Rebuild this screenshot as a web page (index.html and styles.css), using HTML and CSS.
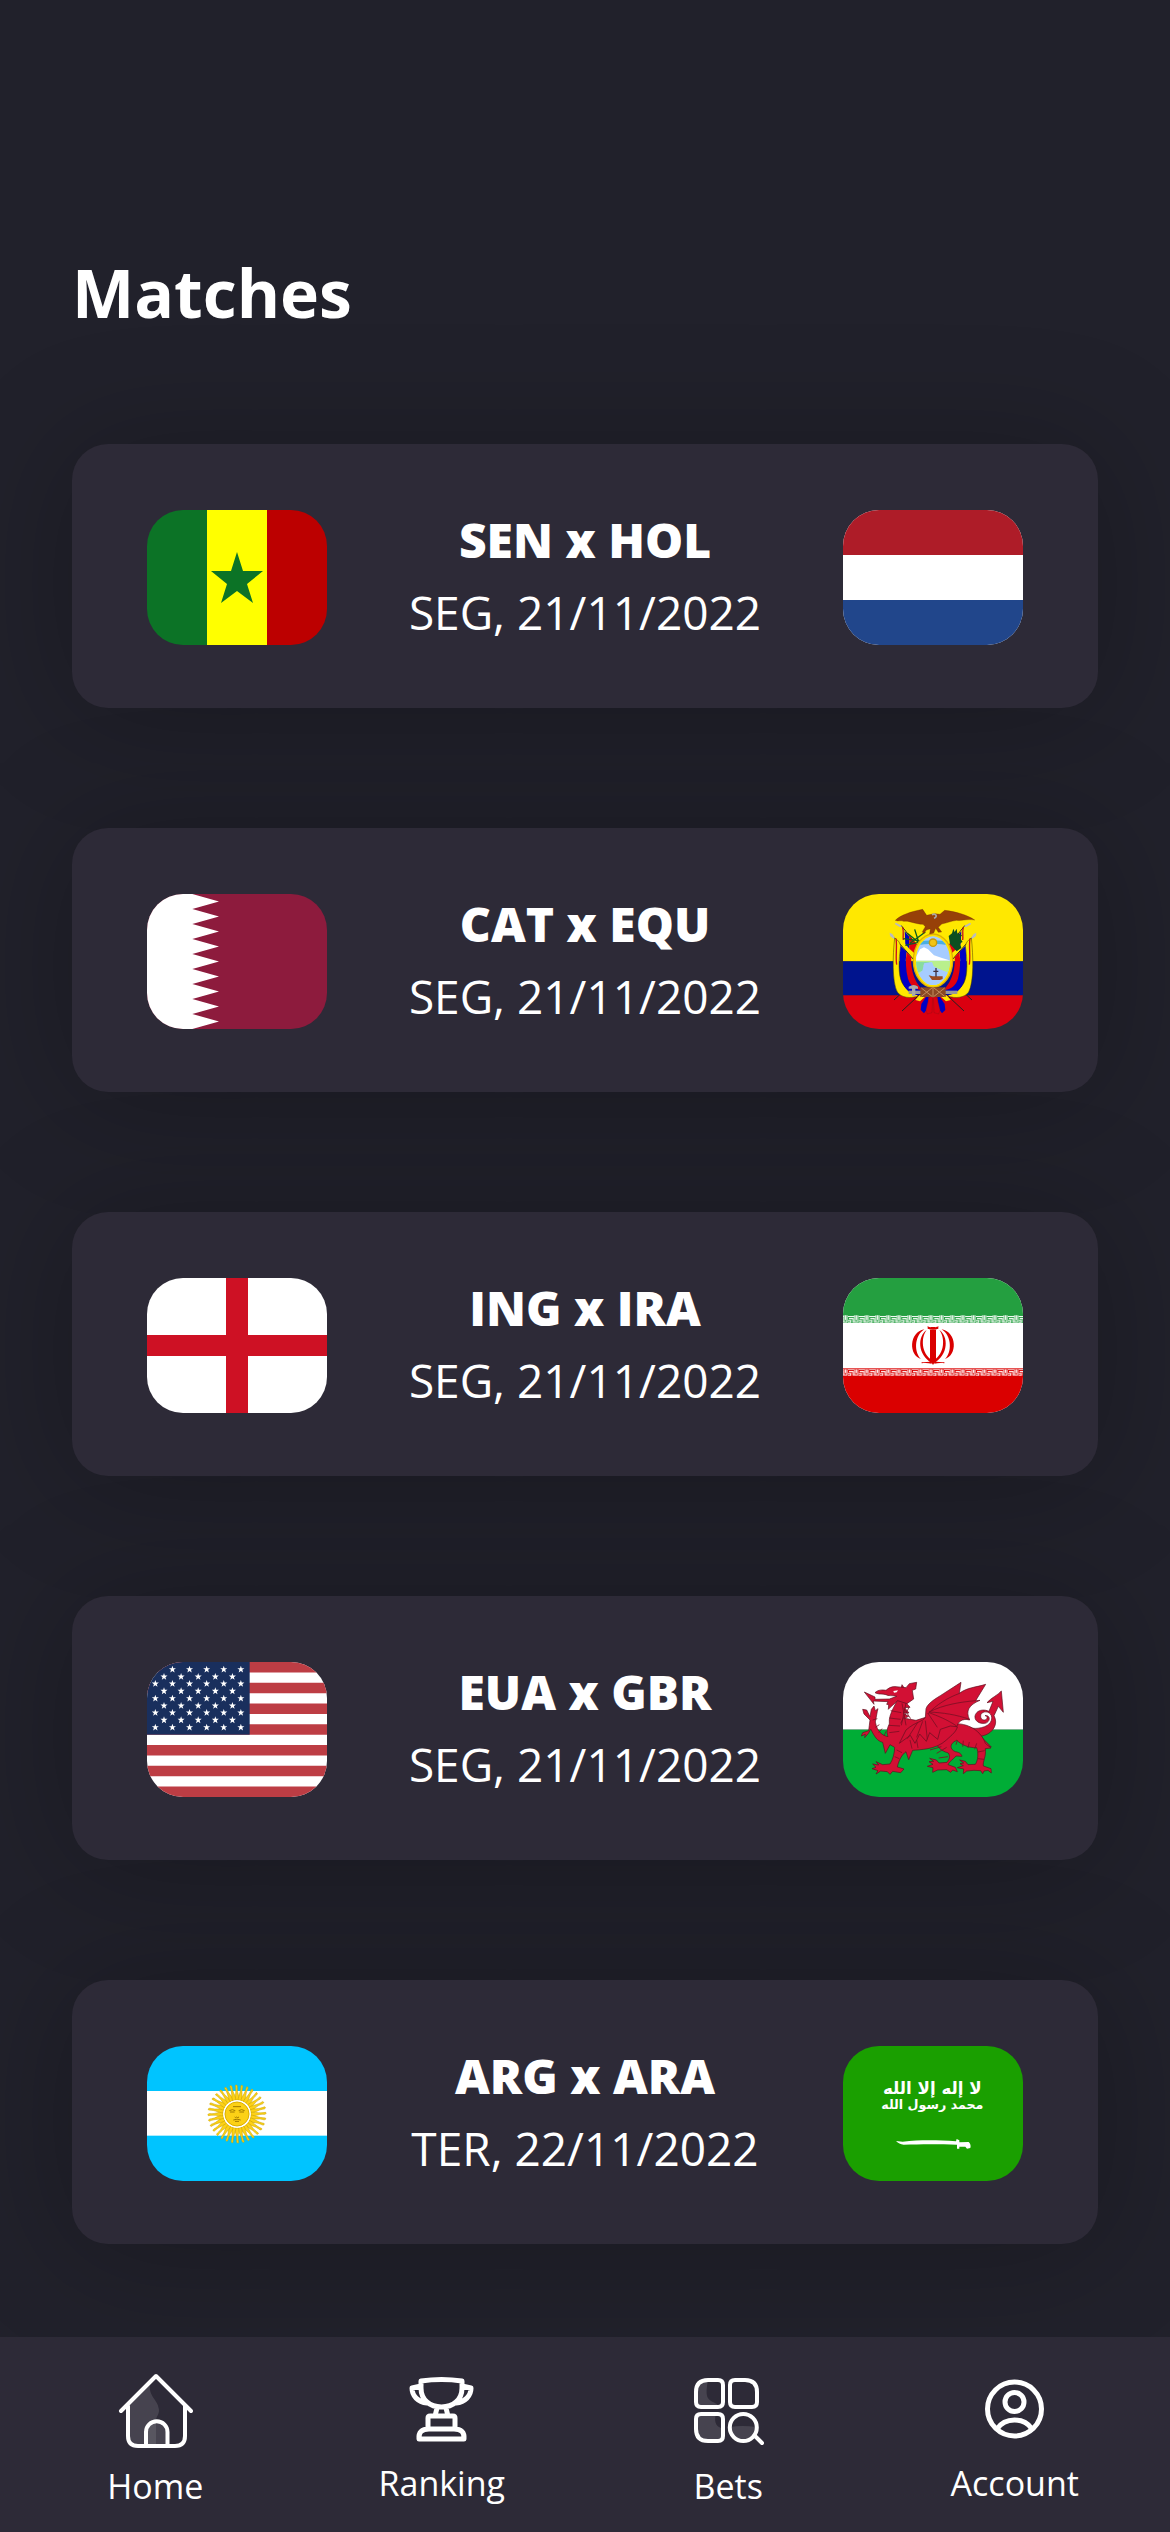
FILE: index.html
```html
<!DOCTYPE html>
<html lang="en">
<head>
<meta charset="utf-8">
<meta name="viewport" content="width=device-width, initial-scale=1">
<title>Matches</title>
<link rel="stylesheet" href="styles.css">
</head>
<body>
<main class="page">
  <h1 class="title">Matches</h1>
  <ul class="matches">
    <li class="match">
      <svg class="flag" viewBox="0 0 180 135" role="img" aria-label="Senegal">
        <rect width="60" height="135" fill="#0c7326"/><rect x="60" width="60" height="135" fill="#ff0"/><rect x="120" width="60" height="135" fill="#bc0000"/>
        <path fill="#0c7326" d="M90 42l6 19h20l-16 13 6 19-16-12-16 12 6-19-16-13h20z"/>
      </svg>
      <div class="info"><h2 class="teams">SEN x HOL</h2><p class="date">SEG, 21/11/2022</p></div>
      <svg class="flag" viewBox="0 0 180 135" role="img" aria-label="Netherlands">
        <rect width="180" height="135" fill="#fff"/><rect width="180" height="45" fill="#ae1c28"/><rect y="90" width="180" height="45" fill="#21468b"/>
      </svg>
    </li>
    <li class="match">
      <svg class="flag" viewBox="51 72 540 405" role="img" aria-label="Qatar">
        <rect x="51" y="72" width="540" height="405" fill="#8d1b3d"/>
        <path fill="#fff" d="M51 72H187L267 94.500 187 117l80 22.500L187 162l80 22.500L187 207l80 22.500L187 252l80 22.500L187 297l80 22.500L187 342l80 22.500L187 387l80 22.500L187 432l80 22.500L187 477H51z"/>
      </svg>
      <div class="info"><h2 class="teams">CAT x EQU</h2><p class="date">SEG, 21/11/2022</p></div>
      <svg class="flag" viewBox="69 72 540 405" role="img" aria-label="Ecuador">
        <rect x="69" y="72" width="540" height="202" fill="#ffe800"/><rect x="69" y="274" width="540" height="102" fill="#00148e"/><rect x="69" y="376" width="540" height="101" fill="#da0010"/>
        <g id="ec-side">
          <path stroke="#222" stroke-width="3" d="M243 166l56 70M222 202l60 68M246 423l60-56M222 390l24-22"/>
          <path fill="#ffe800" stroke="#443a00" stroke-width="1.500" d="M224 204c10 6 16 14 18 24-6 40-8 86 4 110 10 18 20 26 42 30l6 10c-20 8-50 6-62-12-16-30-14-110-8-162z"/>
          <path fill="#0000c4" d="M242 228l18 18c-6 34-2 72 12 96 8 12 20 18 34 20l-10 14c-28-4-42-18-50-44-9-34-8-70-4-104z"/>
          <path fill="#e0000f" d="M260 246l14 16c-2 32 6 62 22 84l10 14c-22-2-36-14-42-34-7-26-8-54-4-80z"/>
          <path fill="#ffe800" d="M243 170l12 14v30l-12-14z"/><path fill="#0000c4" d="M254 184l14 16v36l-12-14z"/><path fill="#e0000f" d="M268 198l22 24v34l-22-20z"/>
          <path fill="none" stroke="#c8101c" stroke-width="4" d="M228 206c4 22-2 54 2 78M248 172c4 14 0 24 2 38"/>
          <path fill="#bcbcbc" d="M240 172l-16-10 4-4 18 10zM220 206l-10-8-1-10 8 4 8 12z"/>
          <path fill="#ffe800" d="M318 378l-18 16-14-4 12-14z"/>
          <path fill="#0000c4" d="M326 380l-4 36-10 14-10-10 2-18 16-24z"/>
          <path fill="#da0010" stroke="#8a1018" stroke-width="1" d="M338 380l-2 48-14 4-4-12 10-40z"/>
        </g>
        <use href="#ec-side" transform="matrix(-1 0 0 1 678 0)"/>
        <path fill="none" stroke="#0b5a20" stroke-width="4" d="M250 206l62 8M262 190l40 32M284 178l14 44M316 186l-46 34M256 226l52-12"/>
        <path fill="#0c4f20" d="M386 198l10-8 4-14 4 10 6-10 2 14 14 6-6 8 8 12-8 4 4 14-14 10-20-22z"/>
        <ellipse cx="339" cy="272" rx="61" ry="82" fill="#e0b000"/><ellipse cx="339" cy="272" rx="57" ry="78" fill="#ffe000"/>
        <clipPath id="ec-oval"><ellipse cx="339" cy="272" rx="51" ry="73"/></clipPath>
        <g clip-path="url(#ec-oval)">
          <rect x="280" y="190" width="120" height="160" fill="#a6ccff"/>
          <path fill="#49aee2" d="M286 218q53-14 106 0v9q-53-12-106 0z"/>
          <path fill="#fff" d="M282 272l18-34 12-6 12 6 18 18 24 8 26 8z"/>
          <path fill="#b9f08c" d="M280 272h116v40l-42-16-30-16-38 44z"/>
          <path fill="#88dba0" d="M280 276h52l-22 10 6 12-22 10-14-2z"/>
          <path fill="#a6ccff" d="M312 280l24-4 6 14 30 14 20 12v30h-96l-12-22 22-16z"/>
          <path fill="#9c4a20" d="M326 316l12 3h30v8l-8 3h-24z"/><path stroke="#403040" stroke-width="4" d="M348 294v26M340 304h15"/>
        </g>
        <circle cx="339" cy="218" r="13" fill="#c99a08"/><circle cx="339" cy="218" r="9" fill="#f2c414"/>
        <path fill="#974008" stroke="#6f2e04" d="M226 151c16-16 46-26 82-33l12 18 14-3 12-2 14 2 14-12c34 4 68 14 90 29-28-4-38 4-54 1-18 2-28 8-45 11l-10 10 10 14-10 1-8-12-6 14-12 3 2-16-12 4-8 11-4-6 9-15-7-7c-25-1-43-12-58-9-9-4-18 1-25-3z"/>
        <path fill="none" stroke="#a8a8a8" stroke-width="5" d="M336 134c12-5 18 6 6 11"/>
        <rect x="266" y="362" width="146" height="10" fill="#999"/><path fill="#aaa" d="M266 350q16-10 28 0v6h-8v22h-10v-22h-10z"/>
        <rect x="301" y="352" width="76" height="29" fill="#8a4824"/><path stroke="#c48a5c" stroke-width="3" d="M304 354l32 25M336 354l-32 25M342 354l32 25M374 354l-32 25M339 350v32"/>
      </svg>
    </li>
    <li class="match">
      <svg class="flag" viewBox="0 0 180 135" role="img" aria-label="England">
        <rect width="180" height="135" fill="#fff"/><path fill="#ce1124" d="M79 0h22v57h79v21h-79v57H79V78H0V57h79z"/>
      </svg>
      <div class="info"><h2 class="teams">ING x IRA</h2><p class="date">SEG, 21/11/2022</p></div>
      <svg class="flag" viewBox="69 69 540 405" role="img" aria-label="Iran">
        <defs>
          <pattern id="kufic" patternUnits="userSpaceOnUse" x="84" y="180" width="32" height="26">
            <path fill="none" stroke="#fff" stroke-width="3" d="M0 4.500h18M3 10.500h12v12M0 22.500h8v-6M20 1v20h-5M24.500 1v14M29 1v20h-8M0 16.500h10"/>
          </pattern>
        </defs>
        <rect x="69" y="69" width="540" height="405" fill="#fff"/><rect x="69" y="69" width="540" height="135" fill="#249f40"/><rect x="69" y="340" width="540" height="134" fill="#da0000"/>
        <rect x="69" y="180" width="540" height="26" fill="url(#kufic)"/>
        <g transform="translate(0 159)"><rect x="69" y="184" width="540" height="20" fill="url(#kufic)"/></g>
        <g fill="#da0000">
          <path d="M330 224h18v92l-9 14-9-14z"/><path d="M323 213c6 6 10 2 16 3 6-1 10 3 16-3v8c-10 4-22 4-32 0z"/>
          <g id="ir-side"><path d="M320 225C292 244 292 300 336 324v-9C304 296 302 248 320 225z"/><path d="M313 223C266 232 266 302 303 312 283 294 281 244 313 223z"/><path d="M305 321c10 2 20-2 30 0v5c-10-2-20-2-30-1z"/></g>
          <use href="#ir-side" transform="matrix(-1 0 0 1 678 0)"/>
        </g>
      </svg>
    </li>
    <li class="match">
      <svg class="flag" viewBox="51 66 540 405" role="img" aria-label="United States">
        <defs>
          <path id="star" fill="#fff" d="M0-11l2.600 7.500h8l-6.300 5 2.300 8L0 5l-6.600 4.500 2.300-8-6.300-5h8z"/>
          <g id="five"><use href="#star"/><use href="#star" x="51.300"/><use href="#star" x="102.600"/><use href="#star" x="154"/><use href="#star" x="205.300"/></g>
          <g id="six"><use href="#five"/><use href="#star" x="256.600"/></g>
        </defs>
        <rect x="51" y="66" width="540" height="405" fill="#fff"/>
        <path stroke="#bd3d44" stroke-width="31.200" d="M51 81.600h540M51 143.900h540M51 206.200h540M51 268.500h540M51 330.800h540M51 393.100h540M51 455.400h540"/>
        <rect x="51" y="66" width="308" height="218" fill="#192f5d"/>
        <use href="#six" x="76" y="88"/><use href="#five" x="102" y="110"/><use href="#six" x="76" y="131"/><use href="#five" x="102" y="153"/><use href="#six" x="76" y="175"/><use href="#five" x="102" y="197"/><use href="#six" x="76" y="218"/><use href="#five" x="102" y="240"/><use href="#six" x="76" y="262"/>
      </svg>
      <div class="info"><h2 class="teams">EUA x GBR</h2><p class="date">SEG, 21/11/2022</p></div>
      <svg class="flag" viewBox="69 66 540 405" role="img" aria-label="Wales">
        <rect x="69" y="66" width="540" height="203" fill="#fff"/><rect x="69" y="269" width="540" height="202" fill="#00ad36"/>
        <g fill="#d21034" stroke="#5c1020" stroke-width="2" stroke-linejoin="round">
          <path d="M410 258c34 0 46 12 74 5 28-6 34-24 30-36-6-15-26-14-31-4-4 12 4 20 14 16 8-4 4-13-2-12 18-2 16 20 0 23-26 3-38-18-25-32 8-9 24-10 37-4l12-30-18 4c14-16 32-22 43-35l6 64-15-18-13 28c14 26-4 50-26 58l-14 4 32 32-36-8z"/>
          <path d="M396 252c48-6 88 22 100 58l17 14-17 2c3 24-8 38-6 52l23 8 1 13-10-8-12 2-4 8-6-9-20-1-22 2-10 8 1-14-19-4 18-6-10-6 11-2-12-9 17 4 8 10 22-1c8-10 10-36 4-50-24 1-44-8-60-22-24 10-20 28-4 34 14 2 18 8 20 14l-18-1c-8 10-20 16-24 26l22 8 6 13-14-5-6 7-12-8-27 1-15 7 1-14-17-4 17-6-12-8 14-1-12-9 20 5 8 9 24-2c8-10 10-18 4-28-26-8-36-20-38-42z"/>
          <path d="M240 158c-6 30-36 60-32 94-8 14-8 28-4 38-18-4-32-14-38-44l6-32 2-8-8 6-4-14-8 10-4 22-10-20-12-2 4 14 18 18c-2 12-2 20-4 32l-18 6-4 10 12-5-2 10 12-14 6-12c12 24 20 36 36 40l8 33 14-26 14 8c0 18-6 38-14 50l-22 2-20-9 8 10-18-3 10 10-12 4 18 6-6 10 14-9 20 2 8 8 8-9 24 4 10-11-20-6c4-20 14-38 26-46l8 24 12-28c20-2 70-2 100-30 20-18 30-26 34-40l-60-40-64 20-34-6 12-6-17-10 18 0-13-16 16-1-12-14-8-9 18-2-14-12-6-12 10-1-12-18z"/>
          <path d="M238 310l20-40c30-26 50-24 58-38l2-26c6-20 40-36 60-50l45-29-5 33c24-18 50-18 79-27l-30 49 13-1c-34 14-44 32-31 59-22-6-36 6-38 20l-20-2-30 10-8 30-24-20-10 26-20-22-14 28-14-24z"/>
          <path d="M165 158c9-9 22-9 33-7 8-7 16-12 30-11l30 3 10-12 22-4-3 20-10 4 4 26-20 14-28-9-22 20-6 6 1-14-6-1 4-8-44-2 2 10-29-37 32 15 0 7 43-1 22-8c-16-4-24 0-32-5-12-4-20 1-33-6z"/>
        </g>
        <path fill="none" stroke="#7c1024" stroke-width="2.500" d="M419 160c-34 12-70 34-96 62M467 182c-46 4-96 12-140 34M449 238c-40-14-80-20-122-22M410 258c-30-20-56-30-83-40M352 262l-28-42M322 298l-6-56M290 292l18-48M262 296l32-50M212 212l32 6M208 234l34 4M206 256l34 2M208 278l30-4M158 240l14-4M166 262l12-8M176 278l10-12M192 288l6-14M246 190l12 66M258 190l-14 66M268 200l-26 50M252 206l20 30M230 330l16 8M224 350l14 6M330 330l34-10M350 340l30-18M356 354l28-4M412 300l-4 14M430 302l-2 18M448 306l-4 18M470 310l-6 18M474 336l20-4M474 356l18 2M270 300l6 26M290 300l4 24"/>
        <path fill="#fff" d="M220 153l14-2-4 6-8 1z"/>
      </svg>
    </li>
    <li class="match">
      <svg class="flag" viewBox="51 63 540 405" role="img" aria-label="Argentina">
        <defs>
          <path id="ray" fill="#fcd116" stroke="#c9a200" stroke-width="1.500" d="M-5-42c-2-12 4-22 0-44 5-4 7 2 6 8-1 14 6 20 4 36z"/>
          <g id="ray2"><use href="#ray"/><use href="#ray" transform="rotate(11.250)"/></g>
          <g id="ray4"><use href="#ray2"/><use href="#ray2" transform="rotate(22.500)"/></g>
          <g id="ray8"><use href="#ray4"/><use href="#ray4" transform="rotate(45)"/></g>
          <g id="ray16"><use href="#ray8"/><use href="#ray8" transform="rotate(90)"/></g>
        </defs>
        <rect x="51" y="63" width="540" height="405" fill="#00c4ff"/><rect x="51" y="198" width="540" height="134" fill="#fff"/>
        <g transform="translate(321 267)">
          <use href="#ray16"/><use href="#ray16" transform="rotate(180)"/>
          <circle r="41" fill="#fff"/><circle r="36" fill="#fcd116" stroke="#dcb000" stroke-width="3"/>
          <path fill="none" stroke="#a07a00" stroke-width="3" d="M-23-10q9-6 18 0M5-10q9-6 18 0M-21-6h14M7-6h14M-7 9q3 4 6 0 3 4 7 0M-11 18q11-5 22 0M-6 22h12M-12-22h24"/>
        </g>
      </svg>
      <div class="info"><h2 class="teams">ARG x ARA</h2><p class="date">TER, 22/11/2022</p></div>
      <svg class="flag" viewBox="69 63 540 405" role="img" aria-label="Saudi Arabia">
        <rect x="69" y="63" width="540" height="405" fill="#1a9f00"/>
        <g class="creed" text-anchor="middle" fill="#fff"><text x="337" y="207">لا إله إلا الله</text><text class="creed-end" x="337" y="252">محمد رسول الله</text></g>
        <path fill="#fff" d="M228 348l20 2c50-5 100-5 160-1l2-7 8 4v6l28-1q8 7 5 18l-10 2-5-6h-18v6h-7v-12c-50-2-110-2-160 0-10 0-16-5-23-11z"/>
      </svg>
    </li>
  </ul>
</main>
<nav class="tabs">
  <a class="tab" href="#home">
    <svg class="icon icon-large" viewBox="0 0 75 75" aria-hidden="true">
      <path fill="#fff" fill-opacity=".12" d="M32 10c-2 14 8 16 9 27 0 5-3 7-3 10v26H20q-10 0-10-10V32z"/><path fill="#fff" fill-opacity=".1" d="M28 73V58q0-10 10-10v25z"/><path fill="#fff" fill-opacity=".12" d="M38 48q11 0 11 11v14H38z"/>
      <path d="M3 38L38 3l35 35M10 33v30q0 10 10 10h37q10 0 10-10V33M28 73V59a10.700 10.700 0 0 1 21.500 0v14"/>
    </svg>
    <span>Home</span>
  </a>
  <a class="tab" href="#ranking">
    <svg class="icon icon-bold" viewBox="0 0 72 72" aria-hidden="true">
      <path d="M15 8q20.500-3 41 0v7c0 12-9 19-20.500 19S15 27 15 15zM15 13l-9 2c0 8 6 14 15 15M56 13l9 2c0 8-6 14-15 15M31 35l-2 8M40 35l2 8M22 55V45q0-2 2-2h23q2 0 2 2v10M13 66q-1-10 10-10h25q11 0 10 10z"/>
    </svg>
    <span>Ranking</span>
  </a>
  <a class="tab" href="#bets">
    <svg class="icon icon-large" viewBox="0 0 75 75" aria-hidden="true">
      <path fill="#fff" fill-opacity=".12" d="M17 7c-3 16-1 19 5 22q5 2 7 5H10q-5 0-5-5V19Q5 7 17 7M25 41c-3 9 2 14 6 14v13H17Q5 68 5 56V46q0-5 5-5M39 54q12-2 26 0a13 13 0 0 1-26 0"/>
      <path d="M17 7h10q5 0 5 5v17q0 5-5 5H10q-5 0-5-5V19Q5 7 17 7zM44 7h10q12 0 12 12v10q0 5-5 5H44q-5 0-5-5V12q0-5 5-5zM10 41h17q5 0 5 5v17q0 5-5 5H17Q5 68 5 56V46q0-5 5-5zM64 63l7 7"/><circle cx="52.300" cy="54.500" r="13.500"/>
    </svg>
    <span>Bets</span>
  </a>
  <a class="tab" href="#account">
    <svg class="icon icon-bold" viewBox="0 0 72 72" aria-hidden="true">
      <circle cx="35.500" cy="36" r="27"/><circle cx="35.500" cy="29" r="9.500"/><path d="M18 56q6-9 17.500-9T53 56"/>
    </svg>
    <span>Account</span>
  </a>
</nav>
</body>
</html>
```
FILE: styles.css
```css
* {
  box-sizing: border-box;
  margin: 0;
  padding: 0;
}

body {
  display: flex;
  flex-direction: column;
  min-height: 100vh;
  background: #21212b;
  color: #fff;
  font-family: "Open Sans", "Noto Sans", sans-serif;
}

.page {
  flex: 1;
  padding: 252px 72px 93px;
}

.title {
  font-size: 66px;
  font-weight: 700;
  line-height: 80px;
  margin-bottom: 112px;
}

.matches {
  display: flex;
  flex-direction: column;
  gap: 120px;
  list-style: none;
}

.match {
  display: flex;
  justify-content: space-between;
  padding: 66px 75px 63px;
  border-radius: 36px;
  background: #2d2a37;
  box-shadow: 0 6px 120px rgba(0, 0, 0, 0.25);
}

.flag {
  flex: none;
  width: 180px;
  height: 135px;
  border-radius: 36px;
}

.creed {
  font-family: "DejaVu Sans", sans-serif;
  font-size: 50px;
  font-weight: 700;
}

.creed-end {
  font-size: 38px;
}

.info {
  display: flex;
  flex-direction: column;
  gap: 12px;
  text-align: center;
  line-height: 60px;
}

.teams {
  font-size: 48px;
  font-weight: 800;
  line-height: inherit;
}

.date {
  font-size: 46px;
}

.tabs {
  position: sticky;
  bottom: 0;
  display: grid;
  grid-template-columns: repeat(4, 1fr);
  padding: 36px 12px 22px;
  background: #2d2a37;
}

.tab {
  display: flex;
  flex-direction: column;
  align-items: center;
  gap: 14px;
  color: #fff;
  font-size: 34px;
  line-height: 48px;
  text-decoration: none;
}

.icon {
  width: 72px;
  height: 72px;
  fill: none;
  stroke: #fff;
  stroke-width: 4;
  stroke-linecap: round;
  stroke-linejoin: round;
}

.icon-bold {
  stroke-width: 5;
}

.icon-large {
  width: 75px;
  height: 75px;
}

.icon [fill-opacity] {
  stroke: none;
}
```
